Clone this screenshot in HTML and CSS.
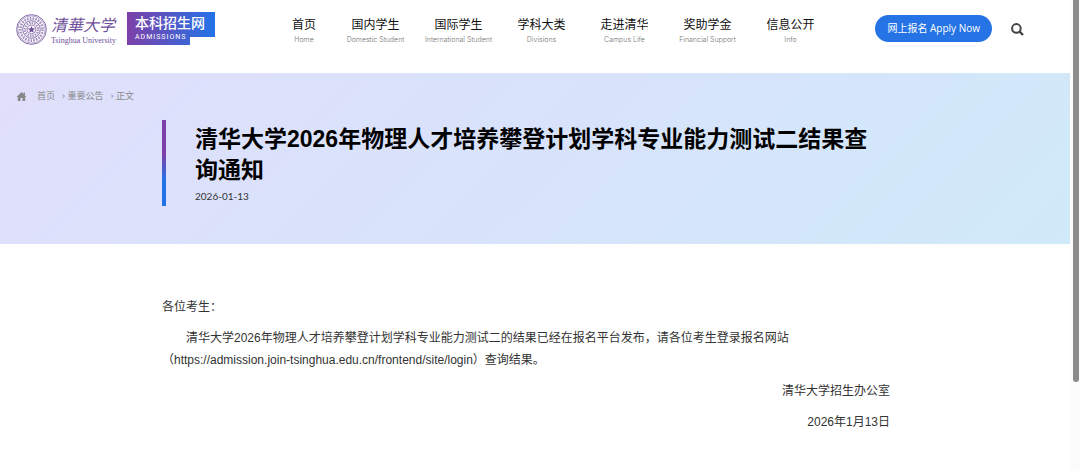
FILE: index.html
```html
<!DOCTYPE html>
<html lang="zh-CN">
<head>
    <meta charset="UTF-8">
    <meta name="viewport" content="width=device-width, initial-scale=1.0">
    <title>清华大学本科招生网</title>
    <link rel="stylesheet" href="styles.css">
</head>
<body>
    <div class="page">
        <header class="header">
            <a class="logo" href="#">
                <svg class="seal" viewBox="0 0 60 60" fill="none" stroke="#70509b">
                    <circle cx="30" cy="30" r="28.8" stroke-width="1.6"/>
                    <circle cx="30" cy="30" r="26.4" stroke-width="1"/>
                    <circle cx="30" cy="30" r="21.5" stroke-width="5" stroke-dasharray="3.2 2.2" opacity=".65"/>
                    <circle cx="30" cy="30" r="17" stroke-width="1.6"/>
                    <circle cx="30" cy="30" r="12.5" stroke-width="5" stroke-dasharray="3 1.8" opacity=".6"/>
                    <circle cx="30" cy="30" r="8.4" stroke-width="1.4"/>
                    <path d="M30 23l2 4.8 5.2.4-4 3.3 1.3 5-4.5-2.7-4.5 2.7 1.3-5-4-3.3 5.2-.4z" fill="#70509b" stroke="none"/>
                </svg>
                <span class="school">
                    <span class="school-cn">清華大学</span>
                    <span class="school-en">Tsinghua University</span>
                </span>
            </a>
            <a class="site" href="#">
                <span class="site-cn">本科招生网</span>
                <span class="site-en">ADMISSIONS</span>
            </a>
            <nav class="nav">
                <a class="nav-item nav-home" href="#">首页<small>Home</small></a>
                <a class="nav-item" href="#">国内学生<small>Domestic Student</small></a>
                <a class="nav-item" href="#">国际学生<small>International Student</small></a>
                <a class="nav-item" href="#">学科大类<small>Divisions</small></a>
                <a class="nav-item" href="#">走进清华<small>Campus Life</small></a>
                <a class="nav-item" href="#">奖助学金<small>Financial Support</small></a>
                <a class="nav-item" href="#">信息公开<small>Info</small></a>
            </nav>
            <a class="apply" href="#">网上报名 Apply Now</a>
            <button class="search" type="button" aria-label="搜索">
                <svg viewBox="0 0 13 13" fill="none" stroke="#444">
                    <circle cx="5.4" cy="5.4" r="4.3" stroke-width="2"/>
                    <path d="M8.5 8.5l3.5 3.5" stroke-width="2.4"/>
                </svg>
            </button>
        </header>

        <section class="banner">
            <div class="crumbs">
                <svg class="home-icon" viewBox="0 0 10 9" fill="#888">
                    <path d="M5 0l5 4.9H8.7V9H6V6H4v3H1.3V4.9H0zM7 .6h1.5V3H7z"/>
                </svg>
                <a href="#">首页</a>
                <a href="#">› 重要公告</a>
                <span>› 正文</span>
            </div>
            <div class="headline">
                <h1>清华大学2026年物理人才培养攀登计划学科专业能力测试二结果查询通知</h1>
                <time datetime="2026-01-13">2026-01-13</time>
            </div>
        </section>

        <article class="article">
            <p>各位考生：</p>
            <p class="indent">清华大学2026年物理人才培养攀登计划学科专业能力测试二的结果已经在报名平台发布，请各位考生登录报名网站<span class="url">（https://admission.join-tsinghua.edu.cn/frontend/site/login）</span>查询结果。</p>
            <p class="sign">清华大学招生办公室</p>
            <p class="sign">2026年1月13日</p>
        </article>
    </div>
    <div class="scroll">
        <div class="scroll-thumb"></div>
    </div>
</body>
</html>
```

FILE: styles.css
```css
* {
    box-sizing: border-box;
}
body {
    display: flex;
    height: 100vh;
    margin: 0;
    overflow: hidden;
    background: #fff;
    font-family: "Liberation Sans", "Noto Sans CJK SC", sans-serif;
    font-size: 12px;
    color: #333;
}
a {
    color: inherit;
    text-decoration: none;
}
.page {
    flex: 1;
    min-width: 0;
}

/* header */
.header {
    display: flex;
    align-items: flex-start;
    height: 73px;
    padding: 12px 46px 0 16px;
}
.logo {
    display: flex;
    gap: 4px;
    width: 111px;
    color: #70509b;
}
.seal {
    flex: none;
    width: 31px;
    height: 31px;
    margin-top: 2px;
}
.school {
    display: flex;
    flex-direction: column;
    white-space: nowrap;
}
.school-cn {
    font-family: "Noto Sans CJK SC", sans-serif;
    font-size: 16px;
    font-style: italic;
    line-height: 24px;
}
.school-en {
    font-family: "Liberation Serif", serif;
    font-size: 8px;
    line-height: 10px;
}
.site {
    display: flex;
    flex-direction: column;
    width: 88px;
    height: 33px;
    padding-left: 8px;
    background: linear-gradient(90deg, #7d40a8, #2373e8);
    clip-path: polygon(0 0, 100% 0, 100% 25px, 63px 25px, 63px 100%, 0 100%);
    color: #fff;
    white-space: nowrap;
}
.site-cn {
    font-size: 14px;
    font-weight: 500;
    line-height: 22px;
}
.site-en {
    font-family: Roboto, sans-serif;
    font-size: 7px;
    letter-spacing: 1px;
    line-height: 6px;
}
.nav {
    display: flex;
    margin-left: 59px;
}
.nav-item {
    width: 83px;
    padding-top: 4px;
    color: #111;
    line-height: 19px;
    text-align: center;
    white-space: nowrap;
}
.nav-home {
    width: 60px;
}
.nav-item small {
    display: block;
    color: #777;
    font-family: Inter, sans-serif;
    font-size: 7px;
    font-weight: 300;
    line-height: 9px;
}
.apply {
    margin: 3px 0 0 auto;
    padding: 0 12px;
    border-radius: 14px;
    background: #2673e5;
    color: #fff;
    font-family: "Open Sans", "Noto Sans CJK SC", sans-serif;
    font-size: 10px;
    line-height: 27px;
    white-space: nowrap;
}
.search {
    display: flex;
    width: 13px;
    margin: 11px 0 0 19px;
    padding: 0;
    border: 0;
    background: none;
    cursor: pointer;
}
.search svg {
    width: 13px;
    height: 13px;
}

/* title banner */
.banner {
    height: 171px;
    padding: 14px 180px 0 16px;
    background: linear-gradient(135deg, #e0dffc, #d8e3fb 50%, #d0eaf9);
}
.crumbs {
    display: flex;
    align-items: center;
    gap: 7px;
    color: #888;
    font-size: 9px;
    line-height: 18px;
}
.home-icon {
    width: 11px;
    height: 9px;
    margin-right: 3px;
}
.headline {
    position: relative;
    height: 86px;
    margin: 15px 0 0 146px;
    padding: 4px 10px 0 33px;
}
.headline::before {
    content: "";
    position: absolute;
    left: 0;
    top: 0;
    width: 4px;
    height: 100%;
    background: linear-gradient(#7d40a8 40%, #2373e8 70%);
}
.headline h1 {
    margin: 0;
    color: #000;
    font-size: 23px;
    line-height: 31px;
}
.headline time {
    display: block;
    color: #333;
    font-family: Lato, sans-serif;
    font-size: 10px;
    line-height: 20px;
}

/* notice text */
.article {
    display: flex;
    flex-direction: column;
    gap: 9px;
    padding: 52px 180px 0 162px;
    line-height: 22px;
}
.article p {
    margin: 0;
}
.article .indent {
    text-indent: 2em;
}
.url {
    white-space: nowrap;
}
.article .sign {
    text-align: right;
}

/* scrollbar */
.scroll {
    width: 10px;
    padding: 0 1px 0 3px;
    background: #fcfcfc;
}
.scroll-thumb {
    height: 81%;
    border-radius: 0 0 3px 3px;
    background: #8b8b8b;
}
```
